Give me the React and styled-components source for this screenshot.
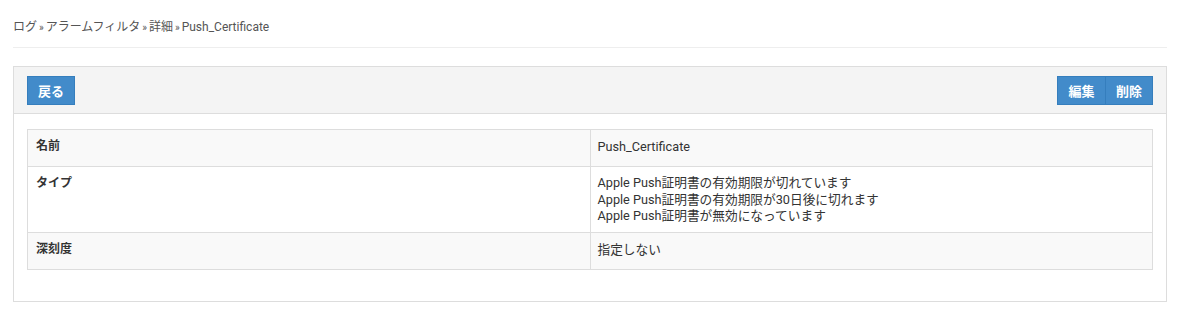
import styled, { createGlobalStyle } from 'styled-components';

const GlobalStyle = createGlobalStyle`
  html, body {
    margin: 0;
    padding: 0;
    background: #fff;
  }
  body {
    font-family: Roboto, "Noto Sans CJK JP", sans-serif;
    font-size: 12px;
    color: #333;
  }
`;

const Page = styled.div`
  padding: 0 16px 0 13px;
`;

const Breadcrumb = styled.div`
  padding: 19px 0 11px;
  border-bottom: 1px solid #eee;
  color: #555;
  font-size: 12px;
  line-height: 17px;
`;

const Sep = styled.span`
  font-size: 10px;
  margin: 0 -0.5px;
`;

const Panel = styled.div`
  margin-top: 18px;
  border: 1px solid #ddd;
  background: #fff;
`;

const PanelHeader = styled.div`
  display: flex;
  justify-content: space-between;
  align-items: center;
  background: #f4f4f4;
  border-bottom: 1px solid #ddd;
  padding: 9px 13px 8px;
`;

const BtnGroup = styled.div`
  display: flex;
`;

const Button = styled.button`
  font-family: Roboto, "Noto Sans CJK JP", sans-serif;
  font-size: 13px;
  font-weight: 700;
  color: #fff;
  background: #428bca;
  border: 1px solid #357ebd;
  border-radius: 0;
  height: 29px;
  padding: 0 ${({ $wide }) => ($wide ? 10.5 : 10)}px;
  cursor: pointer;
  & + & {
    margin-left: -1px;
  }
`;

const PanelBody = styled.div`
  padding: 15px 13px 31px;
`;

const Table = styled.table`
  width: 100%;
  border-collapse: collapse;
  border: 1px solid #ddd;
`;

const Row = styled.tr`
  background: ${({ $striped }) => ($striped ? '#f9f9f9' : '#fff')};
`;

const Cell = styled.td`
  border: 1px solid #ddd;
  padding: 8px 8px ${({ $multi }) => ($multi ? 7 : 11)}px 7px;
  vertical-align: top;
  line-height: 17px;
  font-size: ${({ $label }) => ($label ? 12 : 12.7)}px;
  font-weight: ${({ $label }) => ($label ? 700 : 400)};
  width: 50%;
  &:first-child {
    padding-left: 8px;
  }
`;

const Line = styled.div`
  line-height: 16.7px;
`;

const rows = [
  { label: '名前', values: ['Push_Certificate'] },
  {
    label: 'タイプ',
    values: [
      'Apple Push証明書の有効期限が切れています',
      'Apple Push証明書の有効期限が30日後に切れます',
      'Apple Push証明書が無効になっています',
    ],
  },
  { label: '深刻度', values: ['指定しない'] },
];

const crumbs = ['ログ', 'アラームフィルタ', '詳細', 'Push_Certificate'];

export default function App() {
  return (
    <>
      <GlobalStyle />
      <Page>
        <Breadcrumb>
          {crumbs.map((c, i) => (
            <span key={c}>
              {i > 0 && <Sep> » </Sep>}
              {c}
            </span>
          ))}
        </Breadcrumb>
        <Panel>
          <PanelHeader>
            <Button>戻る</Button>
            <BtnGroup>
              <Button $wide>編集</Button>
              <Button>削除</Button>
            </BtnGroup>
          </PanelHeader>
          <PanelBody>
            <Table>
              <tbody>
                {rows.map((r, i) => {
                  const multi = r.values.length > 1;
                  return (
                    <Row key={r.label} $striped={i % 2 === 0}>
                      <Cell $label>{r.label}</Cell>
                      <Cell $multi={multi}>
                        {multi
                          ? r.values.map((v) => <Line key={v}>{v}</Line>)
                          : r.values[0]}
                      </Cell>
                    </Row>
                  );
                })}
              </tbody>
            </Table>
          </PanelBody>
        </Panel>
      </Page>
    </>
  );
}
